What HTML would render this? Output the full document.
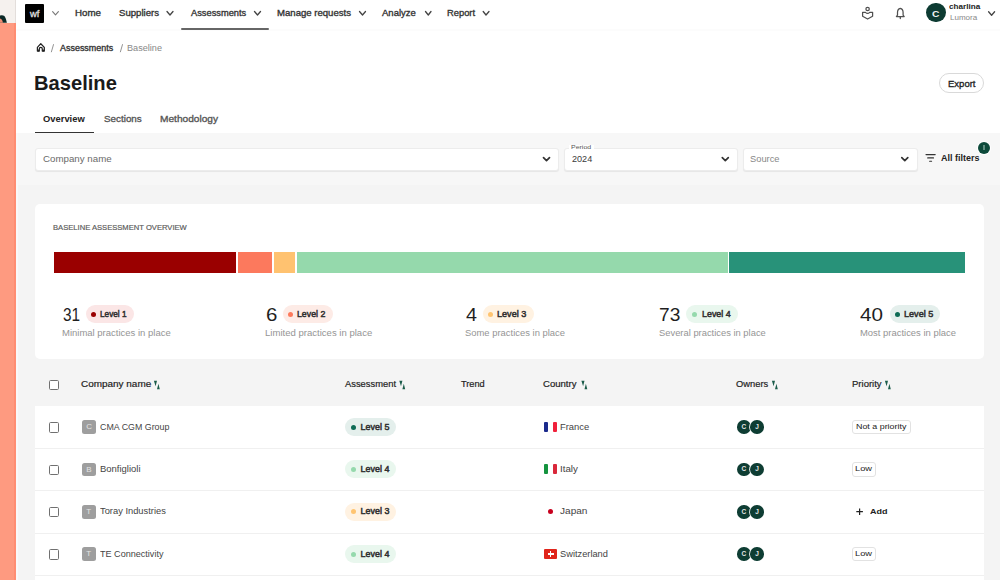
<!DOCTYPE html>
<html><head><meta charset="utf-8">
<style>
*{margin:0;padding:0;box-sizing:border-box}
html,body{width:1000px;height:580px;overflow:hidden;background:#fff;font-family:"Liberation Sans",sans-serif;color:#1a1a1a}
.a{position:absolute;white-space:nowrap;line-height:1}
.r{position:absolute}
.inp{position:absolute;background:#fff;border-radius:3px;border:1px solid #ececec;box-shadow:0 1px 1px rgba(0,0,0,0.07)}
.seg{position:absolute;top:252.1px;height:21.2px}
.badge{position:absolute;height:18px;border-radius:9px}
.dot{position:absolute;width:5px;height:5px;border-radius:50%}
.cb{position:absolute;width:10.6px;height:10.6px;border:1.25px solid #707070;border-radius:1.6px;background:#fff}
.cav{position:absolute;width:13.8px;height:13.8px;border-radius:2.5px;background:#9e9e9e}
.own{position:absolute;width:13.5px;height:13.5px;border-radius:50%;background:#0e3d33;box-shadow:0 0 0 0.8px #fff}
.prio{position:absolute;border:1px solid #e2e2e2;border-radius:3px;background:#fff}
svg{position:absolute;overflow:visible}
</style></head><body>
<!-- left strip -->
<div class="r" style="left:0;top:0;width:15.5px;height:580px;background:#fe9a80"></div>
<div class="r" style="left:0;top:0;width:15.5px;height:22.7px;background:#f5f1ee"></div>
<div class="r" style="left:13.9px;top:22.7px;width:2px;height:557.3px;background:#ff8d72"></div>
<div class="r" style="left:14.5px;top:0;width:1px;height:22.7px;background:#e3dedb"></div>
<svg style="left:0;top:0" width="16" height="24"><path d="M0 15.5 Q2.6 14.7 4.4 16.1 Q5.6 17.5 6.9 22.7 L0 22.7Z" fill="#0b2926"/><path d="M0 18.6 Q2.3 19.2 2.9 22.7 L0 22.7Z" fill="#ee8c73"/></svg>

<!-- nav -->
<div class="r" style="left:15.5px;top:29px;width:985px;height:2px;background:#fcfcfc"></div>
<div class="r" style="left:25.2px;top:4.2px;width:18.8px;height:18.4px;background:#000;border-radius:1px"></div>
<svg style="left:0;top:0" width="1000" height="30" fill="none" stroke="#444" stroke-width="1.3" stroke-linecap="round" stroke-linejoin="round">
<path d="M52.6 11.6 L55.5 14.8 L58.4 11.6" stroke="#777" stroke-width="1.1"/>
<path d="M167 11.5 L170 15 L173 11.5"/>
<path d="M254.5 11.5 L257.5 15 L260.5 11.5"/>
<path d="M359.5 11.5 L362.5 15 L365.5 11.5"/>
<path d="M425.5 11.5 L428.3 15 L431 11.5"/>
<path d="M483.2 11.5 L486 15 L489 11.5"/>
<path d="M988.6 11.8 L991.6 15.2 L994.6 11.8"/>
<!-- inbox icon -->
<g stroke="#505050" stroke-width="1.25">
<circle cx="867.6" cy="9" r="1.7"/>
<path d="M862.6 12.3 H865.5 Q867.6 14.6 869.7 12.3 H872.6 V16.3 L867.6 19 L862.6 16.3 Z"/>
<!-- bell -->
<path d="M896.4 16.6 H904.2 L903.1 15.2 V12.6 Q903.1 9 900.3 8.4 Q897.5 9 897.5 12.6 V15.2 Z"/>
<path d="M900.3 17.2 V18.6"/>
</g>
</svg>
<div class="r" style="left:180.5px;top:28.3px;width:88px;height:2.1px;background:#666;border-radius:1px"></div>
<div class="r" style="left:926px;top:2.8px;width:19.6px;height:19.6px;border-radius:50%;background:#0d3b32"></div>

<!-- breadcrumb -->
<svg style="left:0;top:0" width="200" height="60" fill="none" stroke="#222" stroke-width="1.3" stroke-linejoin="round">
<path d="M37.4 47.4 L40.8 43.7 L44.3 47.4 V51 H42.3 V49 Q42.3 47.4 40.8 47.4 Q39.3 47.4 39.3 49 V51 H37.4 Z" stroke-width="1.25"/><circle cx="38.4" cy="50.6" r="1" fill="#222" stroke="none"/><circle cx="43.3" cy="50.6" r="1" fill="#222" stroke="none"/>
<path d="M53.6 44.2 L51.3 52.2" stroke="#888" stroke-width="0.9"/>
<path d="M122.6 44.2 L120.3 52.2" stroke="#888" stroke-width="0.9"/>
</svg>

<!-- export pill -->
<div class="r" style="left:939px;top:73.1px;width:45px;height:20.4px;border:1px solid #d9d9d9;border-radius:10.2px"></div>
<!-- tab underline -->
<div class="r" style="left:35px;top:131.6px;width:59.4px;height:1.9px;background:#333"></div>

<!-- gray areas -->
<div class="r" style="left:15.5px;top:133px;width:985px;height:52px;background:#f7f7f7"></div>
<div class="r" style="left:15.5px;top:185px;width:985px;height:395px;background:#f4f4f4"></div>
<div class="r" style="left:15.9px;top:133px;width:2px;height:447px;background:#f9f9f9"></div>

<!-- inputs -->
<div class="inp" style="left:35.3px;top:148.3px;width:523.5px;height:23px"></div>
<div class="inp" style="left:563.5px;top:148.3px;width:174.5px;height:23px"></div>
<div class="inp" style="left:742.5px;top:148.3px;width:175px;height:23px"></div>
<div class="r" style="left:569px;top:145px;width:25px;height:4px;background:#fff"></div>
<svg style="left:0;top:0" width="1000" height="200" fill="none" stroke="#333" stroke-width="1.7" stroke-linecap="round" stroke-linejoin="round">
<path d="M543.5 157.6 L546.5 160.6 L549.5 157.6"/>
<path d="M722.3 157.6 L725.3 160.6 L728.3 157.6"/>
<path d="M901.8 157.6 L904.8 160.6 L907.8 157.6"/>
<g stroke="#333" stroke-width="1.1">
<path d="M926 154.6 H935.2"/><path d="M927.7 157.9 H933.5"/><path d="M929.6 161.3 H931.6"/>
</g>
</svg>
<div class="r" style="left:978.1px;top:141.6px;width:12px;height:12px;border-radius:50%;background:#0d4a3b;box-shadow:0 0 0 1px #fff"></div>
<div class="r" style="left:983.3px;top:144.6px;width:1.6px;height:5.8px;background:#5f8d80"></div>

<!-- card -->
<div class="r" style="left:35px;top:204px;width:948.8px;height:155.3px;background:#fff;border-radius:5px"></div>
<div class="seg" style="left:54px;width:182.4px;background:#9a0000"></div>
<div class="seg" style="left:238px;width:33.8px;background:#fc795d"></div>
<div class="seg" style="left:273.8px;width:21.4px;background:#ffc270"></div>
<div class="seg" style="left:296.8px;width:430.8px;background:#95d9ac"></div>
<div class="seg" style="left:729.4px;width:235.6px;background:#289279"></div>

<div class="badge" style="left:85.6px;top:304.8px;width:48.7px;background:#fbe6e6"></div><div class="dot" style="left:91.1px;top:311.5px;background:#9a0000"></div>
<div class="badge" style="left:282.8px;top:304.8px;width:50.7px;background:#fdebe6"></div><div class="dot" style="left:288.3px;top:311.5px;background:#fd7a5c"></div>
<div class="badge" style="left:482.8px;top:304.8px;width:51.1px;background:#fff2e2"></div><div class="dot" style="left:488.3px;top:311.5px;background:#ffc470"></div>
<div class="badge" style="left:686.2px;top:304.8px;width:51.4px;background:#e9f7ee"></div><div class="dot" style="left:691.5px;top:311.5px;background:#95d9ac"></div>
<div class="badge" style="left:889.5px;top:304.8px;width:50.7px;background:#e4efec"></div><div class="dot" style="left:894.8px;top:311.5px;background:#0e6b55"></div>

<!-- table -->
<div class="cb" style="left:48.5px;top:379.7px"></div>
<svg style="left:0;top:0" width="1000" height="400" fill="#1a5c4a">
<path d="M153.9 380.7 H157 L155.6 386.2 Z M157 389.3 H159.8 L158.4 383.8 Z"/>
<path d="M399.3 380.7 H402.4 L401 386.2 Z M402.4 389.3 H405.2 L403.8 383.8 Z"/>
<path d="M581.4 380.7 H584.5 L583.1 386.2 Z M584.5 389.3 H587.3 L585.9 383.8 Z"/>
<path d="M771.9 380.7 H775 L773.6 386.2 Z M775 389.3 H777.8 L776.4 383.8 Z"/>
<path d="M884.9 380.7 H888 L886.6 386.2 Z M888 389.3 H890.8 L889.4 383.8 Z"/>
</svg>
<div class="r" style="left:35px;top:406px;width:948.7px;height:174px;background:#fff"></div>
<div class="r" style="left:35px;top:447.5px;width:948.7px;height:1px;background:#f0f0f0"></div>
<div class="r" style="left:35px;top:490px;width:948.7px;height:1px;background:#f0f0f0"></div>
<div class="r" style="left:35px;top:532.5px;width:948.7px;height:1px;background:#f0f0f0"></div>
<div class="r" style="left:35px;top:575px;width:948.7px;height:1px;background:#f0f0f0"></div>
<div class="cb" style="left:48.5px;top:422.2px"></div>
<div class="cav" style="left:82.1px;top:420.2px"></div>
<div class="a" style="left:86.2px;top:423.2px;font-size:8px;color:#e4e4e4">C</div>
<div class="badge" style="left:345px;top:417.9px;width:51.2px;background:#e4efec"></div><div class="dot" style="left:350.7px;top:424.6px;background:#0e6b55"></div>
<div class="r" style="left:544px;top:422.0px;width:4.2px;height:10px;background:#1b2a8c;border-radius:1px"></div><div class="r" style="left:552.6px;top:422.0px;width:4.2px;height:10px;background:#f0213b;border-radius:1px"></div>
<div class="own" style="left:737.3px;top:420.4px"></div><div class="own" style="left:750.2px;top:420.4px"></div>
<div class="a" style="left:741.6px;top:424.0px;font-size:6.5px;font-weight:700;color:#e6e6e6">C</div><div class="a" style="left:755.2px;top:424.0px;font-size:6.5px;font-weight:700;color:#e6e6e6">J</div>
<div class="prio" style="left:851.7px;top:419.9px;width:59.1px;height:14.4px"></div>
<div class="cb" style="left:48.5px;top:464.5px"></div>
<div class="cav" style="left:82.1px;top:462.5px"></div>
<div class="a" style="left:86.2px;top:465.5px;font-size:8px;color:#e4e4e4">B</div>
<div class="badge" style="left:345px;top:460.2px;width:51.2px;background:#e9f7ee"></div><div class="dot" style="left:350.7px;top:466.9px;background:#95d9ac"></div>
<div class="r" style="left:544px;top:464.3px;width:4.2px;height:10px;background:#15933f;border-radius:1px"></div><div class="r" style="left:552.6px;top:464.3px;width:4.2px;height:10px;background:#d9273a;border-radius:1px"></div>
<div class="own" style="left:737.3px;top:462.7px"></div><div class="own" style="left:750.2px;top:462.7px"></div>
<div class="a" style="left:741.6px;top:466.3px;font-size:6.5px;font-weight:700;color:#e6e6e6">C</div><div class="a" style="left:755.2px;top:466.3px;font-size:6.5px;font-weight:700;color:#e6e6e6">J</div>
<div class="prio" style="left:851.7px;top:462.2px;width:24.6px;height:14.4px"></div>
<div class="cb" style="left:48.5px;top:506.8px"></div>
<div class="cav" style="left:82.1px;top:504.8px"></div>
<div class="a" style="left:86.2px;top:507.8px;font-size:8px;color:#e4e4e4">T</div>
<div class="badge" style="left:345px;top:502.5px;width:51.2px;background:#fff2e2"></div><div class="dot" style="left:350.7px;top:509.2px;background:#ffc470"></div>
<div class="r" style="left:547.6px;top:509.2px;width:5.2px;height:5.2px;border-radius:50%;background:#c8001e"></div>
<div class="own" style="left:737.3px;top:505.0px"></div><div class="own" style="left:750.2px;top:505.0px"></div>
<div class="a" style="left:741.6px;top:508.6px;font-size:6.5px;font-weight:700;color:#e6e6e6">C</div><div class="a" style="left:755.2px;top:508.6px;font-size:6.5px;font-weight:700;color:#e6e6e6">J</div>
<svg style="left:0;top:0" width="1000" height="580" stroke="#222" stroke-width="1.2"><path d="M856.3 511.7 H862.9 M859.6 508.4 V515.0"/></svg>
<div class="cb" style="left:48.5px;top:549.2px"></div>
<div class="cav" style="left:82.1px;top:547.2px"></div>
<div class="a" style="left:86.2px;top:550.2px;font-size:8px;color:#e4e4e4">T</div>
<div class="badge" style="left:345px;top:544.9px;width:51.2px;background:#e9f7ee"></div><div class="dot" style="left:350.7px;top:551.6px;background:#95d9ac"></div>
<div class="r" style="left:544px;top:549.0px;width:13px;height:10px;background:#e0251b;border-radius:1px"></div><div class="r" style="left:549.6px;top:551.0px;width:1.9px;height:6px;background:#fff"></div><div class="r" style="left:547.5px;top:553.0px;width:6px;height:1.9px;background:#fff"></div>
<div class="own" style="left:737.3px;top:547.4px"></div><div class="own" style="left:750.2px;top:547.4px"></div>
<div class="a" style="left:741.6px;top:551.0px;font-size:6.5px;font-weight:700;color:#e6e6e6">C</div><div class="a" style="left:755.2px;top:551.0px;font-size:6.5px;font-weight:700;color:#e6e6e6">J</div>
<div class="prio" style="left:851.7px;top:546.9px;width:24.6px;height:14.4px"></div>
<div class="a" id="t0" style="left:30.39px;top:8.93px;font-size:9.78px;font-weight:400;color:#e0e0e0;transform:scaleX(0.9600);transform-origin:0 0;-webkit-text-stroke:0.32px #e0e0e0;">wf</div>
<div class="a" id="t1" style="left:74.87px;top:8.67px;font-size:8.66px;font-weight:400;color:#333;transform:scaleX(1.1273);transform-origin:0 0;-webkit-text-stroke:0.32px #333;">Home</div>
<div class="a" id="t2" style="left:118.95px;top:8.67px;font-size:8.66px;font-weight:400;color:#333;transform:scaleX(1.1086);transform-origin:0 0;-webkit-text-stroke:0.32px #333;">Suppliers</div>
<div class="a" id="t3" style="left:190.59px;top:8.67px;font-size:8.66px;font-weight:400;color:#333;transform:scaleX(1.0725);transform-origin:0 0;-webkit-text-stroke:0.32px #333;">Assessments</div>
<div class="a" id="t4" style="left:276.95px;top:8.67px;font-size:8.66px;font-weight:400;color:#333;transform:scaleX(1.1061);transform-origin:0 0;-webkit-text-stroke:0.32px #333;">Manage requests</div>
<div class="a" id="t5" style="left:381.95px;top:8.67px;font-size:8.66px;font-weight:400;color:#333;transform:scaleX(1.1000);transform-origin:0 0;-webkit-text-stroke:0.32px #333;">Analyze</div>
<div class="a" id="t6" style="left:446.92px;top:8.67px;font-size:8.66px;font-weight:400;color:#333;transform:scaleX(1.0800);transform-origin:0 0;-webkit-text-stroke:0.32px #333;">Report</div>
<div class="a" id="t7" style="left:949.11px;top:4.33px;font-size:6.70px;font-weight:700;color:#222;transform:scaleX(1.2160);transform-origin:0 0;">charlina</div>
<div class="a" id="t8" style="left:950.00px;top:14.73px;font-size:6.70px;font-weight:400;color:#888;transform:scaleX(1.2000);transform-origin:0 0;">Lumora</div>
<div class="a" id="t9" style="left:931.76px;top:9.05px;font-size:9.64px;font-weight:700;color:#f0f0f0;transform:scaleX(1.0667);transform-origin:0 0;">C</div>
<div class="a" id="t10" style="left:60.21px;top:44.63px;font-size:8.24px;font-weight:400;color:#333;transform:scaleX(1.0857);transform-origin:0 0;-webkit-text-stroke:0.32px #333;">Assessments</div>
<div class="a" id="t11" style="left:126.53px;top:44.63px;font-size:8.24px;font-weight:400;color:#888;transform:scaleX(1.1065);transform-origin:0 0;">Baseline</div>
<div class="a" id="t12" style="left:33.99px;top:73.60px;font-size:19.97px;font-weight:700;color:#1a1a1a;transform:scaleX(1.0099);transform-origin:0 0;">Baseline</div>
<div class="a" id="t13" style="left:43.39px;top:114.60px;font-size:9.22px;font-weight:700;color:#222;transform:scaleX(1.0175);transform-origin:0 0;">Overview</div>
<div class="a" id="t14" style="left:103.55px;top:114.60px;font-size:9.22px;font-weight:400;color:#555;transform:scaleX(1.0676);transform-origin:0 0;-webkit-text-stroke:0.32px #555;">Sections</div>
<div class="a" id="t15" style="left:159.74px;top:114.60px;font-size:9.22px;font-weight:400;color:#555;transform:scaleX(1.1000);transform-origin:0 0;-webkit-text-stroke:0.32px #555;">Methodology</div>
<div class="a" id="t16" style="left:947.62px;top:79.03px;font-size:9.78px;font-weight:400;color:#222;transform:scaleX(0.9750);transform-origin:0 0;-webkit-text-stroke:0.32px #222;">Export</div>
<div class="a" id="t17" style="left:42.60px;top:153.53px;font-size:9.78px;font-weight:400;color:#6a6a6a;transform:scaleX(0.9956);transform-origin:0 0;">Company name</div>
<div class="a" id="t18" style="left:570.89px;top:144.56px;font-size:5.73px;font-weight:400;color:#555;transform:scaleX(1.2188);transform-origin:0 0;">Period</div>
<div class="a" id="t19" style="left:571.60px;top:154.80px;font-size:9.22px;font-weight:400;color:#3a3a3a;transform:scaleX(0.9850);transform-origin:0 0;">2024</div>
<div class="a" id="t20" style="left:749.85px;top:153.73px;font-size:9.78px;font-weight:400;color:#888;transform:scaleX(0.9533);transform-origin:0 0;">Source</div>
<div class="a" id="t21" style="left:941.00px;top:152.73px;font-size:9.78px;font-weight:700;color:#222;transform:scaleX(0.9195);transform-origin:0 0;">All filters</div>
<div class="a" id="t22" style="left:53.04px;top:223.57px;font-size:7.96px;font-weight:400;color:#5a5a5a;transform:scaleX(0.9568);transform-origin:0 0;-webkit-text-stroke:0.18px #5a5a5a;">BASELINE ASSESSMENT OVERVIEW</div>
<div class="a" id="t23" style="left:63.09px;top:304.93px;font-size:18.99px;font-weight:400;color:#1f1f1f;transform:scaleX(0.8100);transform-origin:0 0;">31</div>
<div class="a" id="t24" style="left:266.34px;top:304.93px;font-size:18.99px;font-weight:400;color:#1f1f1f;transform:scaleX(1.0778);transform-origin:0 0;">6</div>
<div class="a" id="t25" style="left:465.98px;top:304.93px;font-size:18.99px;font-weight:400;color:#1f1f1f;transform:scaleX(1.0400);transform-origin:0 0;">4</div>
<div class="a" id="t26" style="left:659.39px;top:304.93px;font-size:18.99px;font-weight:400;color:#1f1f1f;transform:scaleX(1.0100);transform-origin:0 0;">73</div>
<div class="a" id="t27" style="left:860.33px;top:304.93px;font-size:18.99px;font-weight:400;color:#1f1f1f;transform:scaleX(1.0900);transform-origin:0 0;">40</div>
<div class="a" id="t28" style="left:100.05px;top:310.12px;font-size:9.08px;font-weight:400;color:#303030;transform:scaleX(0.9069);transform-origin:0 0;-webkit-text-stroke:0.5px #303030;">Level 1</div>
<div class="a" id="t29" style="left:297.41px;top:310.12px;font-size:9.08px;font-weight:400;color:#303030;transform:scaleX(0.9655);transform-origin:0 0;-webkit-text-stroke:0.5px #303030;">Level 2</div>
<div class="a" id="t30" style="left:497.00px;top:310.12px;font-size:9.08px;font-weight:400;color:#303030;transform:scaleX(1.0000);transform-origin:0 0;-webkit-text-stroke:0.5px #303030;">Level 3</div>
<div class="a" id="t31" style="left:701.60px;top:310.12px;font-size:9.08px;font-weight:400;color:#303030;transform:scaleX(0.9793);transform-origin:0 0;-webkit-text-stroke:0.5px #303030;">Level 4</div>
<div class="a" id="t32" style="left:904.00px;top:310.12px;font-size:9.08px;font-weight:400;color:#303030;transform:scaleX(1.0000);transform-origin:0 0;-webkit-text-stroke:0.5px #303030;">Level 5</div>
<div class="a" id="t33" style="left:61.98px;top:328.68px;font-size:9.36px;font-weight:400;color:#959595;transform:scaleX(1.0160);transform-origin:0 0;">Minimal practices in place</div>
<div class="a" id="t34" style="left:264.78px;top:328.68px;font-size:9.36px;font-weight:400;color:#959595;transform:scaleX(1.0223);transform-origin:0 0;">Limited practices in place</div>
<div class="a" id="t35" style="left:464.79px;top:328.68px;font-size:9.36px;font-weight:400;color:#959595;transform:scaleX(1.0082);transform-origin:0 0;">Some practices in place</div>
<div class="a" id="t36" style="left:659.40px;top:328.68px;font-size:9.36px;font-weight:400;color:#959595;transform:scaleX(1.0029);transform-origin:0 0;">Several practices in place</div>
<div class="a" id="t37" style="left:859.79px;top:328.68px;font-size:9.36px;font-weight:400;color:#959595;transform:scaleX(1.0096);transform-origin:0 0;">Most practices in place</div>
<div class="a" id="t38" style="left:81.15px;top:380.34px;font-size:8.94px;font-weight:400;color:#222;transform:scaleX(1.1145);transform-origin:0 0;-webkit-text-stroke:0.18px #222;">Company name</div>
<div class="a" id="t39" style="left:344.77px;top:380.34px;font-size:8.94px;font-weight:400;color:#222;transform:scaleX(1.0500);transform-origin:0 0;-webkit-text-stroke:0.18px #222;">Assessment</div>
<div class="a" id="t40" style="left:460.78px;top:380.34px;font-size:8.94px;font-weight:400;color:#222;transform:scaleX(1.0318);transform-origin:0 0;-webkit-text-stroke:0.18px #222;">Trend</div>
<div class="a" id="t41" style="left:543.34px;top:380.34px;font-size:8.94px;font-weight:400;color:#222;transform:scaleX(1.0710);transform-origin:0 0;-webkit-text-stroke:0.18px #222;">Country</div>
<div class="a" id="t42" style="left:736.39px;top:380.34px;font-size:8.94px;font-weight:400;color:#222;transform:scaleX(1.0467);transform-origin:0 0;-webkit-text-stroke:0.18px #222;">Owners</div>
<div class="a" id="t43" style="left:851.76px;top:380.34px;font-size:8.94px;font-weight:400;color:#222;transform:scaleX(1.0667);transform-origin:0 0;-webkit-text-stroke:0.18px #222;">Priority</div>
<div class="a" id="t44" style="left:99.78px;top:422.79px;font-size:8.52px;font-weight:400;color:#444;transform:scaleX(1.0394);transform-origin:0 0;">CMA CGM Group</div>
<div class="a" id="t45" style="left:360.60px;top:422.74px;font-size:8.94px;font-weight:400;color:#303030;transform:scaleX(1.0000);transform-origin:0 0;-webkit-text-stroke:0.5px #303030;">Level 5</div>
<div class="a" id="t46" style="left:560.32px;top:422.79px;font-size:8.52px;font-weight:400;color:#444;transform:scaleX(1.1040);transform-origin:0 0;">France</div>
<div class="a" id="t47" style="left:855.56px;top:423.12px;font-size:7.54px;font-weight:400;color:#222;transform:scaleX(1.1791);transform-origin:0 0;">Not a priority</div>
<div class="a" id="t48" style="left:99.73px;top:465.09px;font-size:8.52px;font-weight:400;color:#444;transform:scaleX(1.1111);transform-origin:0 0;">Bonfiglioli</div>
<div class="a" id="t49" style="left:360.60px;top:465.04px;font-size:8.94px;font-weight:400;color:#303030;transform:scaleX(1.0000);transform-origin:0 0;-webkit-text-stroke:0.5px #303030;">Level 4</div>
<div class="a" id="t50" style="left:560.28px;top:465.09px;font-size:8.52px;font-weight:400;color:#444;transform:scaleX(1.1467);transform-origin:0 0;">Italy</div>
<div class="a" id="t51" style="left:854.77px;top:465.42px;font-size:7.54px;font-weight:400;color:#222;transform:scaleX(1.2308);transform-origin:0 0;">Low</div>
<div class="a" id="t52" style="left:99.74px;top:507.39px;font-size:8.52px;font-weight:400;color:#444;transform:scaleX(1.0949);transform-origin:0 0;">Toray Industries</div>
<div class="a" id="t53" style="left:360.60px;top:507.34px;font-size:8.94px;font-weight:400;color:#303030;transform:scaleX(1.0000);transform-origin:0 0;-webkit-text-stroke:0.5px #303030;">Level 3</div>
<div class="a" id="t54" style="left:560.25px;top:507.39px;font-size:8.52px;font-weight:400;color:#444;transform:scaleX(1.1818);transform-origin:0 0;">Japan</div>
<div class="a" id="t55" style="left:869.78px;top:507.72px;font-size:7.54px;font-weight:700;color:#222;transform:scaleX(1.1929);transform-origin:0 0;">Add</div>
<div class="a" id="t56" style="left:99.76px;top:549.79px;font-size:8.52px;font-weight:400;color:#444;transform:scaleX(1.0644);transform-origin:0 0;">TE Connectivity</div>
<div class="a" id="t57" style="left:360.60px;top:549.74px;font-size:8.94px;font-weight:400;color:#303030;transform:scaleX(1.0000);transform-origin:0 0;-webkit-text-stroke:0.5px #303030;">Level 4</div>
<div class="a" id="t58" style="left:560.33px;top:549.79px;font-size:8.52px;font-weight:400;color:#444;transform:scaleX(1.0884);transform-origin:0 0;">Switzerland</div>
<div class="a" id="t59" style="left:854.77px;top:550.12px;font-size:7.54px;font-weight:400;color:#222;transform:scaleX(1.2308);transform-origin:0 0;">Low</div>
</body></html>
